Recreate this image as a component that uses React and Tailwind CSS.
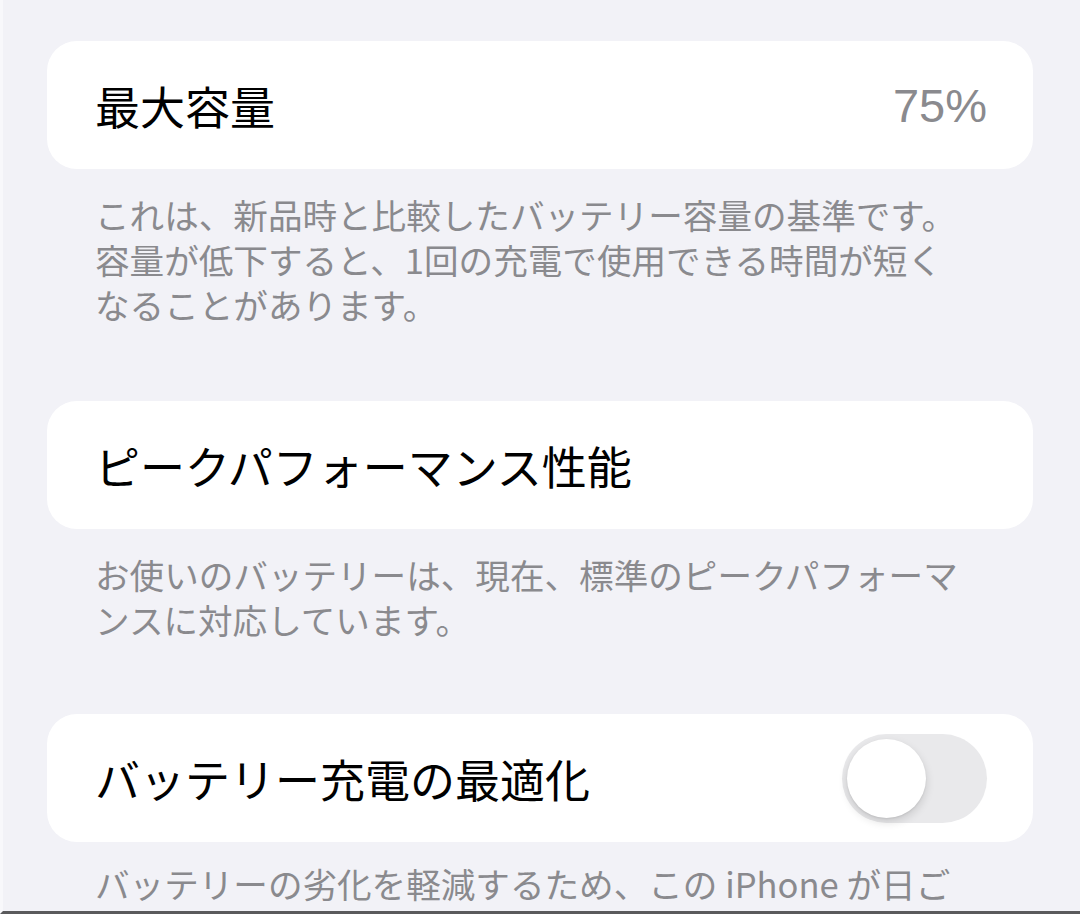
const font = { fontFamily: '"Noto Sans CJK JP", "Noto Sans", sans-serif' };

function Card({ title, children }) {
  return (
    <div className="h-[128px] rounded-[30px] bg-white pl-[48px] pr-[46px] flex items-center justify-between">
      <span className="text-[45px] leading-none text-black whitespace-nowrap">{title}</span>
      {children}
    </div>
  );
}

function Footer({ lines, className }) {
  return (
    <div className={`px-[48px] ${className} text-[34.6px] leading-[45px] text-[#8a8a8e] whitespace-nowrap`}>
      {lines.map((line, i) => (
        <div key={i} className="h-[45px]">{line}</div>
      ))}
    </div>
  );
}

function Toggle() {
  return (
    <div className="w-[145px] h-[89px] rounded-full bg-[#e9e9eb] p-[5px] flex items-center">
      <div className="w-[79px] h-[79px] rounded-full bg-white shadow-[0_4px_10px_rgba(0,0,0,0.14),0_1px_2px_rgba(0,0,0,0.08)]" />
    </div>
  );
}

export default function App() {
  return (
    <div
      className="h-[914px] w-[1080px] overflow-hidden bg-[#f2f2f7] border-l-[3px] border-l-[#f8f8fb] border-b-[3px] border-b-[#5a5a5c]"
      style={font}
    >
      <div className="pl-[44px] pr-[47px] pt-[41px]">
        <Card title="最大容量">
          <span
            className="text-[47px] leading-none text-[#8a8a8e]"
            style={{ fontFamily: '"Liberation Sans", Arial, sans-serif' }}
          >
            75%
          </span>
        </Card>
        <Footer
          className="pt-[23px] pb-[74px]"
          lines={[
            "これは、新品時と比較したバッテリー容量の基準です。",
            "容量が低下すると、1回の充電で使用できる時間が短く",
            "なることがあります。",
          ]}
        />

        <Card title="ピークパフォーマンス性能" />
        <Footer
          className="pt-[23px] pb-[72px]"
          lines={[
            "お使いのバッテリーは、現在、標準のピークパフォーマ",
            "ンスに対応しています。",
          ]}
        />

        <Card title="バッテリー充電の最適化">
          <Toggle />
        </Card>
        <Footer className="pt-[19px]" lines={["バッテリーの劣化を軽減するため、この iPhone が日ご"]} />
      </div>
    </div>
  );
}
